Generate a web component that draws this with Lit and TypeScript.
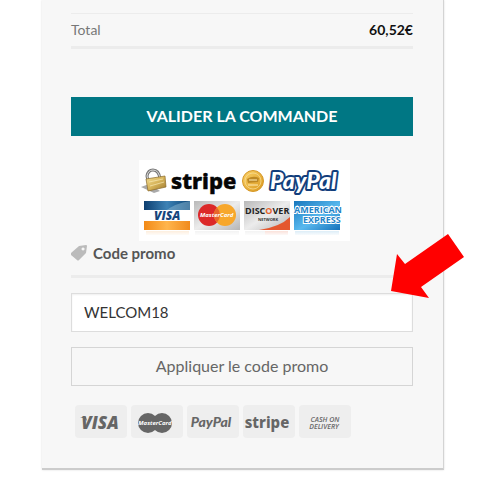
import { LitElement, html, css, svg } from "lit";
import { customElement, state } from "lit/decorators.js";

@customElement("payment-banner")
class PaymentBanner extends LitElement {
  static styles = css`
    :host { display: block; width: 211px; height: 81px; background: #fff; }
    svg { display: block; }
    text { font-family: "Open Sans", "Noto Sans", sans-serif; }
    .stripe { font-size: 22px; font-weight: 800; fill: #050505; stroke: #050505; stroke-width: 0.5; font-family: "Noto Sans", sans-serif; }
    .paypal { font-size: 23px; font-weight: 900; font-style: italic; font-family: Lato, sans-serif; fill: #fff; stroke: #123e7c; stroke-width: 4px; paint-order: stroke; stroke-linejoin: round; }
    .visa { font-size: 12px; font-weight: 800; font-style: italic; fill: #16457c; }
    .mc { font-size: 6px; font-weight: 700; font-style: italic; fill: #fff; }
    .disc { font-size: 9px; font-weight: 700; fill: #222; }
    .net { font-size: 4px; font-weight: 700; fill: #333; }
    .amex { font-size: 9px; font-weight: 700; fill: #2584c8; stroke: #fff; stroke-width: 2px; paint-order: stroke; }
  `;
  render() {
    return html`<svg width="211" height="81" viewBox="0 0 211 81" role="img" aria-label="Moyens de paiement">
      <defs>
        <linearGradient id="gold" x2="1" y2="1"><stop stop-color="#f3df96" /><stop offset=".5" stop-color="#d7b45a" /><stop offset="1" stop-color="#9a762b" /></linearGradient>
        <linearGradient id="coin" x2="1" y2="1"><stop stop-color="#fbd36b" /><stop offset="1" stop-color="#d9971c" /></linearGradient>
        <linearGradient id="blue" x2="1"><stop stop-color="#0e3f70" /><stop offset=".5" stop-color="#3d82b5" /><stop offset="1" stop-color="#0e4677" /></linearGradient>
        <linearGradient id="orange" x2="1"><stop stop-color="#f28a18" /><stop offset=".5" stop-color="#ffb54c" /><stop offset="1" stop-color="#f08a1d" /></linearGradient>
        <linearGradient id="silver" x2="1" y2="1"><stop stop-color="#b9b9b9" /><stop offset=".5" stop-color="#ececec" /><stop offset="1" stop-color="#b5b5b5" /></linearGradient>
        <linearGradient id="amex" x2="1" y2="1"><stop stop-color="#1877bd" /><stop offset=".55" stop-color="#59b9ee" /><stop offset="1" stop-color="#1671ba" /></linearGradient>
        <linearGradient id="fade" x2="0" y2="1"><stop stop-color="#fff" stop-opacity=".65" /><stop offset="1" stop-color="#fff" /></linearGradient>
      </defs>
      <path d="M2 27 15 33 21 31 10 24Z" fill="#aaa" />
      <path d="M9 21 8 16Q9 10 14 10 20 10 21 19" fill="none" stroke="#777" stroke-width="3" />
      <path d="M9 20 8 16Q9 10 14 10 20 10 21 19" fill="none" stroke="#ddd" />
      <path d="M7 19 26 16 27 27 9 31Z" fill="url(#gold)" stroke="#8a6928" stroke-width=".7" />
      <path d="M10 22 24 19M11 26 25 22" stroke="#f8e9b4" stroke-width=".7" />
      <text class="stripe" x="32" y="29">stripe</text>
      <circle cx="114" cy="21" r="10.5" fill="url(#coin)" stroke="#d79827" />
      <circle cx="114" cy="21" r="8" fill="none" stroke="#f9df9b" stroke-width=".7" />
      <path d="M108 19Q114 15 120 18L119 22 109 23Z" fill="#bd8824" />
      <path d="M110 20h8M109 25h10" stroke="#ffedb8" stroke-width="1" />
      <text class="paypal" x="131" y="29">PayPal</text>

      <path d="M5 41h46v11H5Z" fill="url(#blue)" />
      <path d="M25 52Q36 43 51 41v11Z" fill="#8db9d4" opacity=".5" />
      <path d="M5 50h46v12H5Z" fill="#fff" />
      <path d="M5 61h46v9H5Z" fill="url(#orange)" />
      <text class="visa" x="15" y="60">VISA</text>

      <rect x="55" y="41" width="46" height="29" fill="url(#silver)" />
      <circle cx="70" cy="55" r="11" fill="#dc2929" /><circle cx="86" cy="55" r="11" fill="#f7a72b" />
      <path d="M78 47.500A11 11 0 0 1 78 62.500A11 11 0 0 1 78 47.500" fill="#e7662a" />
      <text class="mc" x="61" y="57">MasterCard</text>

      <rect x="105" y="41" width="46" height="29" fill="url(#silver)" />
      <path d="M120 70Q141 67 151 57v13Z" fill="#e4572e" />
      <text class="disc" x="106" y="54">DISC<tspan fill="#e4632d">O</tspan>VER</text>
      <text class="net" x="119" y="61">NETWORK</text>

      <rect x="155" y="41" width="46" height="29" fill="url(#amex)" />
      <text class="amex" x="155" y="53">AMERICAN</text>
      <text class="amex" x="164" y="63">EXPRESS</text>

      <path d="M7 71h43v4H7Z" fill="#f5a044" opacity=".5" />
      <path d="M56 71h44v4H56ZM106 71h20v4H106Z" fill="#bbb" opacity=".5" />
      <path d="M126 71h23v4H126Z" fill="#e4572e" opacity=".5" />
      <path d="M156 71h44v4H156Z" fill="#3d99d6" opacity=".5" />
      <rect x="3" y="71" width="204" height="5" fill="url(#fade)" />
    </svg>`;
  }
}

@customElement("method-badges")
class MethodBadges extends LitElement {
  static styles = css`
    :host { display: flex; gap: 4px; padding-left: 4px; }
    svg { display: block; flex: none; background: #eee; border-radius: 4px; }
    text { font-family: "Open Sans", "Noto Sans", sans-serif; fill: #666; text-anchor: middle; font-weight: 800; }
    .visa { font-size: 17px; font-style: italic; }
    .mc { font-size: 6px; font-style: italic; fill: #fff; font-weight: 700; }
    .pp { font-size: 14px; font-style: italic; font-family: Lato, sans-serif; font-weight: 900; }
    .st { font-size: 15px; font-family: "Noto Sans", sans-serif; }
    .cash { font-size: 7px; font-style: italic; font-weight: 600; }
  `;
  render() {
    const marks: [string, unknown][] = [
      ["Visa", svg`<path d="M5 12h6l1 4Q10 13 5 12Z" fill="#666"/><text class="visa" x="25" y="24">VISA</text>`],
      ["MasterCard", svg`<g fill="#666"><circle cx="17" cy="18" r="10"/><circle cx="31" cy="18" r="10"/></g><text class="mc" x="24" y="20">MasterCard</text>`],
      ["PayPal", svg`<text class="pp" x="24" y="22">PayPal</text>`],
      ["Stripe", svg`<text class="st" x="24" y="23">stripe</text>`],
      ["Cash on delivery", svg`<text class="cash" x="26" y="17">CASH ON</text><text class="cash" x="25" y="24">DELIVERY</text>`],
    ];
    return marks.map(([label, mark]) => html`<svg width="52" height="33" viewBox="0 0 52 33" role="img" aria-label=${label}>${mark}</svg>`);
  }
}

@customElement("app-root")
class AppRoot extends LitElement {
  static styles = css`
    :host { display: block; overflow: hidden; min-height: 100vh; background: #fff; font-family: Lato, "Open Sans", sans-serif; font-size: 14px; color: #777; }
    * { box-sizing: border-box; }
    .card { display: flex; flex-direction: column; margin: 0 39px 20px 42px; padding: 13px 30px 30px 29px; background: #f7f7f7; border-right: 1px solid #d4d4d4; border-bottom: 2px solid #ccc; box-shadow: 0 0 2px #ddd; }
    .total { display: flex; justify-content: space-between; align-items: center; height: 36px; padding-bottom: 2px; border-top: 1px solid #ececec; border-bottom: 3px solid #ececec; }
    .amount { color: #111; font-weight: 700; }
    button { display: block; width: 100%; height: 39px; padding: 0 0 2px; font: 16px Lato, sans-serif; border-radius: 0; }
    .order { margin-top: 48px; border: 0; background: #007784; color: #fff; font-weight: 700; }
    .banner { align-self: center; margin: 24px 0 0 4px; }
    .heading { display: flex; align-items: center; gap: 6px; height: 37px; padding-bottom: 11px; border-bottom: 3px solid #ececec; color: #555; font-size: 15px; font-weight: 700; }
    .field { position: relative; margin: 15px 0; }
    input { display: block; width: 100%; height: 39px; padding: 0 12px 2px; border: 1px solid #ddd; border-radius: 0; background: #fff; color: #333; font: 15px Lato, sans-serif; box-shadow: inset 0 1px 2px #0001; }
    .apply { border: 1px solid #d5d5d5; background: transparent; color: #666; }
    .arrow { position: absolute; right: -51px; top: -59px; pointer-events: none; }
    .badges { margin-top: 19px; }
  `;
  @state() private code = "WELCOM18";
  render() {
    return html`<main class="card">
      <div class="total"><span>Total</span><span class="amount">60,52€</span></div>
      <button class="order" type="button">VALIDER LA COMMANDE</button>
      <payment-banner class="banner"></payment-banner>
      <label class="heading" for="code">
        <svg width="16" height="16" viewBox="0 0 16 16" aria-hidden="true"><path fill="#bbb" fill-rule="evenodd" d="M8 1 15 0q1 0 1 1l-1 7-7 7q-1 1-2 0L0 10q-1-1 0-2ZM12 2.500a1.500 1.500 0 1 0 .1 0Z" /></svg>
        Code promo
      </label>
      <div class="field">
        <input id="code" type="text" .value=${this.code} @input=${(e: Event) => (this.code = (e.target as HTMLInputElement).value)} />
        <svg class="arrow" width="73" height="65" viewBox="0 0 73 65" aria-hidden="true"><path d="M57 0 73 23 30 53 38 64 0 57 6 20 14 30Z" fill="#f00" /></svg>
      </div>
      <button class="apply" type="button">Appliquer le code promo</button>
      <method-badges class="badges"></method-badges>
    </main>`;
  }
}
